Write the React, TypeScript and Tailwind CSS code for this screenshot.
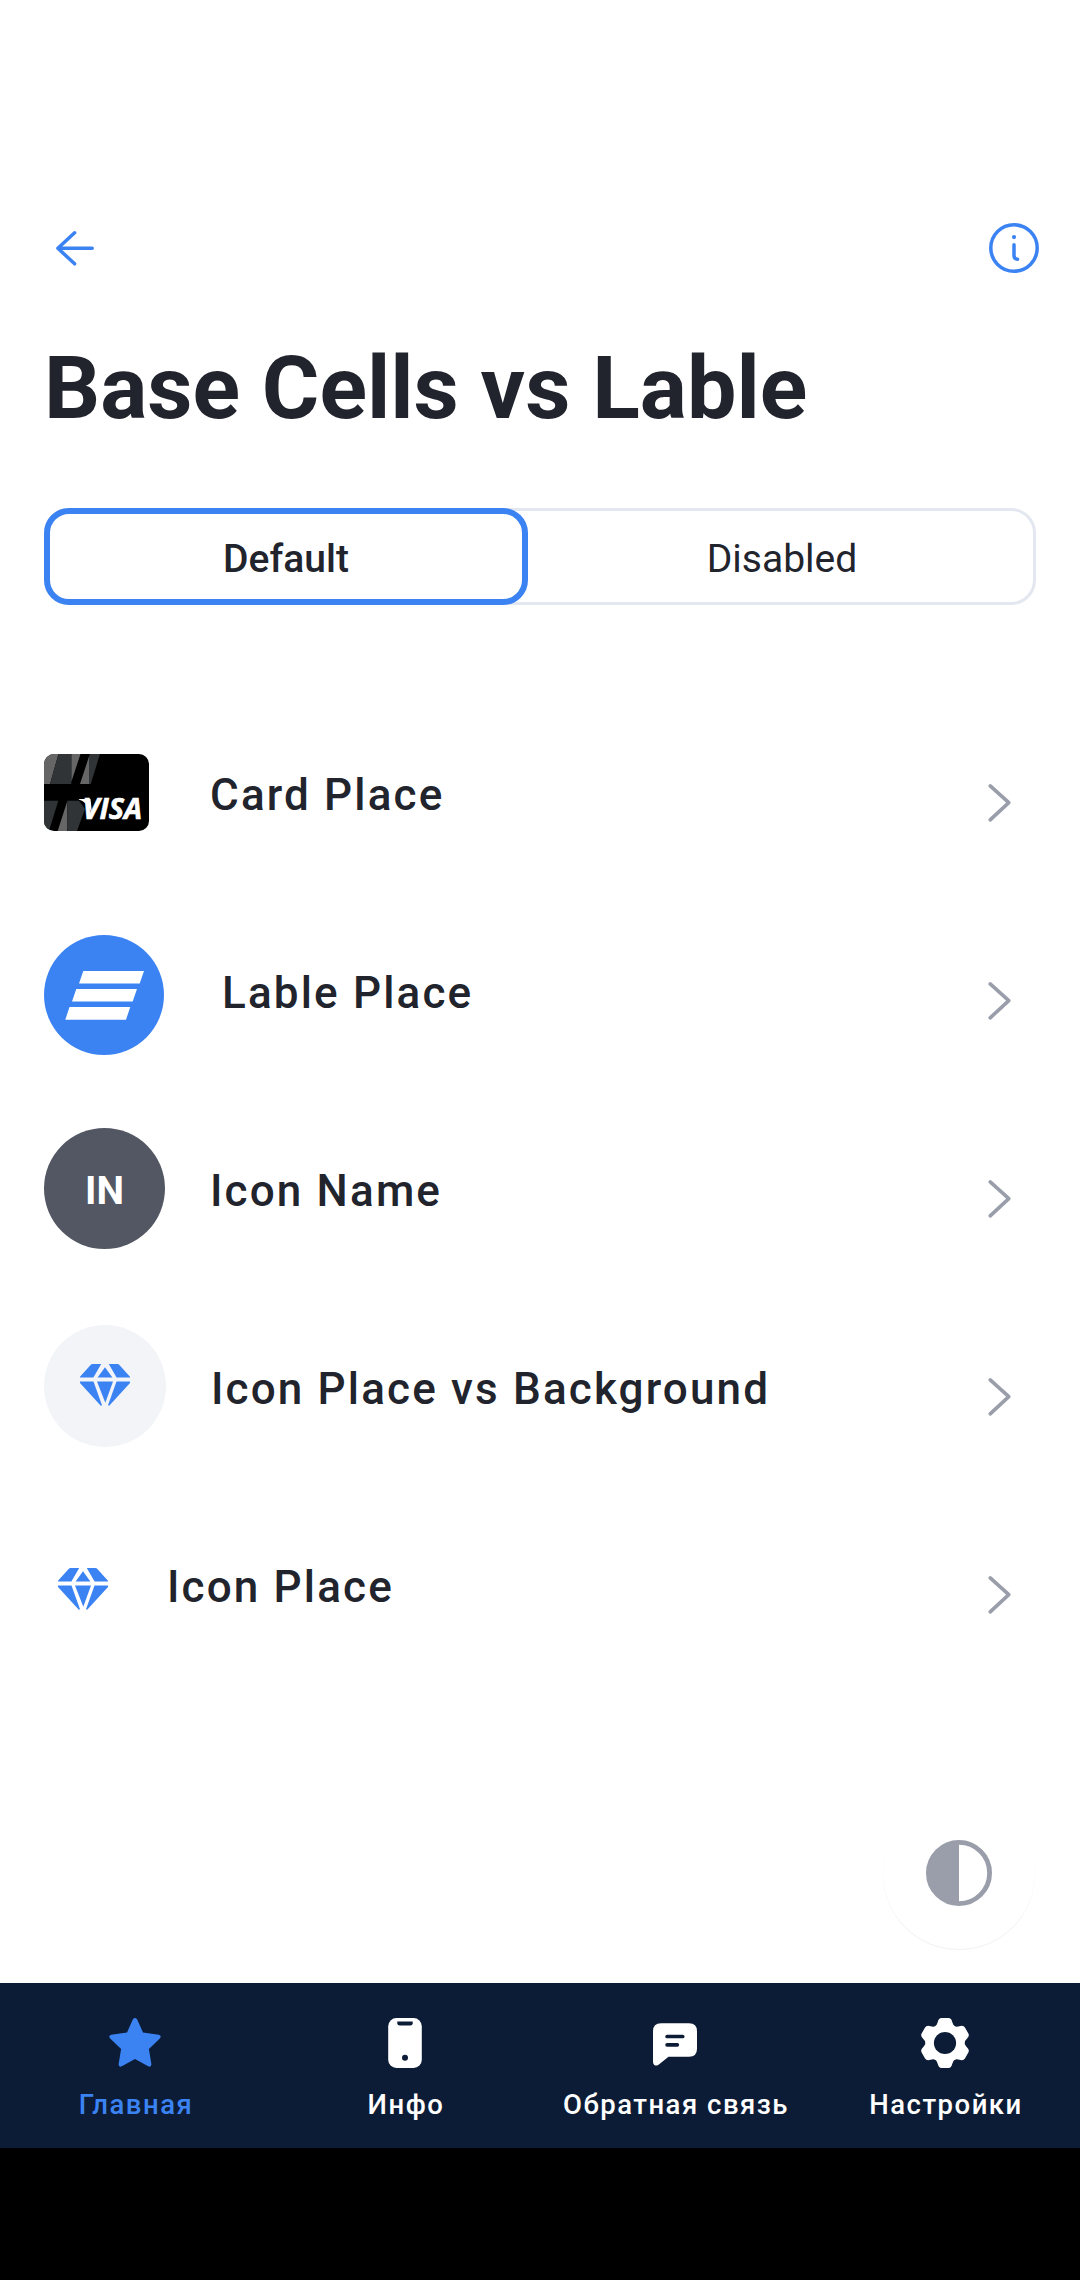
import React from "react";

function BackIcon() {
  return (
    <svg width="42" height="40" viewBox="0 0 42 40" fill="none" stroke="#3B83F3" strokeWidth="3.5" strokeLinecap="round" strokeLinejoin="round">
      <path d="M21.6 4.8 4.9 20.3 21.6 35.8M5.5 20.3H39.2" />
    </svg>
  );
}

function InfoIcon() {
  return (
    <svg width="52" height="52" viewBox="0 0 52 52" fill="none" stroke="#3B83F3" strokeWidth="3.5" strokeLinecap="round">
      <circle cx="26" cy="26" r="23.2" />
      <path d="M26 22.7V33.6Q26 37.2 29.6 37.2" />
      <circle cx="26" cy="15.1" r="2.1" fill="#3B83F3" stroke="none" />
    </svg>
  );
}

function Chevron() {
  return (
    <svg className="mt-[79px] ml-auto mr-[24px] shrink-0" width="26" height="40" viewBox="0 0 26 40" fill="none" stroke="#9A9EAA" strokeWidth="3.6" strokeLinecap="round" strokeLinejoin="round">
      <path d="M4.2 2.9 22.8 19.7 4.2 36.8" />
    </svg>
  );
}

function CardIcon() {
  return (
    <svg width="105" height="77" viewBox="0 0 105 77" className="rounded-[10px] bg-black">
      <path fill="#666" d="M0 0H14.5L6 30H0ZM27.3 0H36.5L27.3 28ZM45 2.5V30H36ZM23.3 47V77H13.7Z" />
      <path fill="#303436" d="M14.5 0H27.3V30H6ZM46 0H56L46.7 30H45V2.5ZM0 46.7H14.3L5 77H0ZM23.3 46.7H35L41 55 33 77H23.3Z" />
      <path fill="#fff" d="M34.8 45H46.5L48 59Q42.5 47.5 34.8 45.6Z" />
      <text x="38.5" y="65" fill="#fff" stroke="#fff" strokeWidth=".6" textLength="59.5" lengthAdjust="spacingAndGlyphs" className="font-['Open_Sans'] text-[28px] font-bold italic">VISA</text>
    </svg>
  );
}

function LabelIcon() {
  return (
    <svg width="120" height="120" viewBox="0 0 120 120">
      <circle cx="60" cy="60" r="60" fill="#3B83F3" />
      <path fill="#fff" d="M39.3 36H100L95.7 48.6H35ZM32.3 54H93L88.7 66.6H28ZM25.5 72H86.3L82 84.7H21.3Z" />
    </svg>
  );
}

function Gem() {
  return (
    <svg width="50" height="42" viewBox="0 0 50 42" fill="#3B83F3">
      <path d="M0 12.7 10.6.9Q11.4 0 12.6 0H21.2L13.4 13.6H0Z" />
      <path d="M50 12.7 39.4.9Q38.6 0 37.4 0H28.8L36.6 13.6H50Z" />
      <path d="M25 3.3 32.4 13.6H17.6Z" />
      <path d="M0 17.6H13.5L22 41.2 20.8 41.8 0 19Z" />
      <path d="M50 17.6H36.5L28 41.2 29.2 41.8 50 19Z" />
      <path d="M17 17.6H33L25.3 38.7Z" />
    </svg>
  );
}

function StarIcon() {
  return (
    <svg width="52" height="52" viewBox="0 0 52 52" fill="#3B83F3">
      <path transform="translate(0 -.7) scale(1 .968)" d="M23.8 2.2Q26-.8 28.2 2.2L34 15.8 49.8 18Q53 19 50.8 22L39.9 32.7 42.4 48.6Q42.3 52 39.2 50.6L26 43.2 12.8 50.6Q9.7 52 9.6 48.6L12.1 32.7 1.2 22Q-1 19 2.2 18L18 15.8Z" />
    </svg>
  );
}

function PhoneIcon() {
  return (
    <svg width="52" height="52" viewBox="0 0 52 52">
      <rect x="9.2" y="0" width="33.6" height="50" rx="8.3" fill="#fff" />
      <path fill="#0C1C36" d="M18.3 3.5H33.7V5.2Q33.7 7.6 31.2 7.6H20.8Q18.3 7.6 18.3 5.2Z" />
      <circle cx="26" cy="39.8" r="3" fill="#0C1C36" />
    </svg>
  );
}

function ChatIcon() {
  return (
    <svg width="52" height="52" viewBox="0 0 52 52">
      <path fill="#fff" d="M12 5.3H40Q48 5.3 48 13.3V30.7Q48 38.7 40 38.7H19.5L10.5 46Q8 48.2 5.7 47.2Q4 46.5 4 43.8V13.3Q4 5.3 12 5.3Z" />
      <path stroke="#0C1C36" strokeWidth="3.7" strokeLinecap="round" d="M18.1 18.5H33.7M18.1 26.8H28.3" />
    </svg>
  );
}

const TEETH = [0, 60, 120, 180, 240, 300];

function GearIcon() {
  return (
    <svg width="52" height="52" viewBox="-26 -25 52 52" fill="#fff">
      <circle r="19.3" />
      {TEETH.map((a) => (
        <path key={a} transform={`rotate(${a})`} d="M-11-15.8Q-8-17.2-7.3-20.8Q-6.4-25-3.4-25H3.4Q6.4-25 7.3-20.8Q8-17.2 11-15.8Z" />
      ))}
      <circle r="11.1" fill="#0C1C36" />
    </svg>
  );
}

function ContrastIcon() {
  return (
    <svg width="66" height="66" viewBox="0 0 66 66">
      <circle cx="33" cy="33" r="30.6" fill="none" stroke="#9A9EAA" strokeWidth="4.8" />
      <path fill="#9A9EAA" d="M33 1A32 32 0 0 0 33 65Z" />
    </svg>
  );
}

const ROWS = [
  { label: "Card Place", icon: <CardIcon />, box: "w-[166px] pt-[50px]" },
  { label: "Lable Place", icon: <LabelIcon />, box: "w-[178px] pt-[33px]" },
  {
    label: "Icon Name",
    icon: (
      <div className="flex size-[121px] items-center justify-center rounded-full bg-[#525763] pt-[6px] text-[39px] leading-none font-bold text-white">IN</div>
    ),
    box: "w-[166px] pt-[28px]",
  },
  {
    label: "Icon Place vs Background",
    icon: (
      <div className="flex size-[122px] items-center justify-center rounded-full bg-[#F2F4F8] pb-[2px]">
        <Gem />
      </div>
    ),
    box: "w-[167px] pt-[27px]",
  },
  { label: "Icon Place", icon: <Gem />, box: "w-[123px] pt-[72px] pl-[14px]" },
];

const TABS = [
  { label: "Главная", icon: <StarIcon />, color: "text-[#3B83F3]" },
  { label: "Инфо", icon: <PhoneIcon />, color: "text-white" },
  { label: "Обратная связь", icon: <ChatIcon />, color: "text-white" },
  { label: "Настройки", icon: <GearIcon />, color: "text-white" },
];

export default function App() {
  return (
    <div className="flex h-[2280px] w-[1080px] flex-col bg-white font-['Roboto',sans-serif] text-[#22242D]">
      <header className="flex h-[274px] shrink-0 items-end justify-between pr-[40px] pl-[53px]">
        <div className="pb-[6px]"><BackIcon /></div>
        <InfoIcon />
      </header>
      <h1 className="mt-[61px] ml-[44px] text-[88px] leading-[106px] font-bold whitespace-nowrap">Base Cells vs Lable</h1>

      <div className="relative mx-[44px] mt-[67px] flex h-[97px] shrink-0 text-[39px] leading-[46px]">
        <div className="absolute inset-0 rounded-[25px] border-[3px] border-[#E3E7EF]" />
        <div className="relative flex w-[484px] items-center justify-center rounded-[25px] border-[6px] border-[#3B83F3] bg-white pt-[4px] font-medium">Default</div>
        <div className="relative flex flex-1 items-center justify-center pt-[4px]">Disabled</div>
      </div>

      <main className="mt-[99px] mr-[44px] ml-[44px]">
        {ROWS.map((r) => (
          <div key={r.label} className="flex h-[198px] items-start">
            <div className={`shrink-0 ${r.box}`}>{r.icon}</div>
            <span className="mt-[65px] text-[44px] leading-[52px] font-medium tracking-[2.16px] whitespace-nowrap">{r.label}</span>
            <Chevron />
          </div>
        ))}
      </main>

      <div className="mt-auto mr-[45px] mb-[34px] flex size-[152px] shrink-0 items-center justify-center self-end rounded-full bg-white shadow-[0_1px_1px_rgba(0,0,0,0.06)]">
        <ContrastIcon />
      </div>

      <nav className="grid h-[165px] shrink-0 grid-cols-4 bg-[#0C1C36]">
        {TABS.map((t) => (
          <div key={t.label} className={`flex flex-col items-center pt-[35px] ${t.color}`}>
            {t.icon}
            <span className="mt-[18px] pl-[2px] text-[27.5px] leading-[34px] font-medium tracking-[1.5px] whitespace-nowrap">{t.label}</span>
          </div>
        ))}
      </nav>
      <div className="h-[132px] shrink-0 bg-black" />
    </div>
  );
}
